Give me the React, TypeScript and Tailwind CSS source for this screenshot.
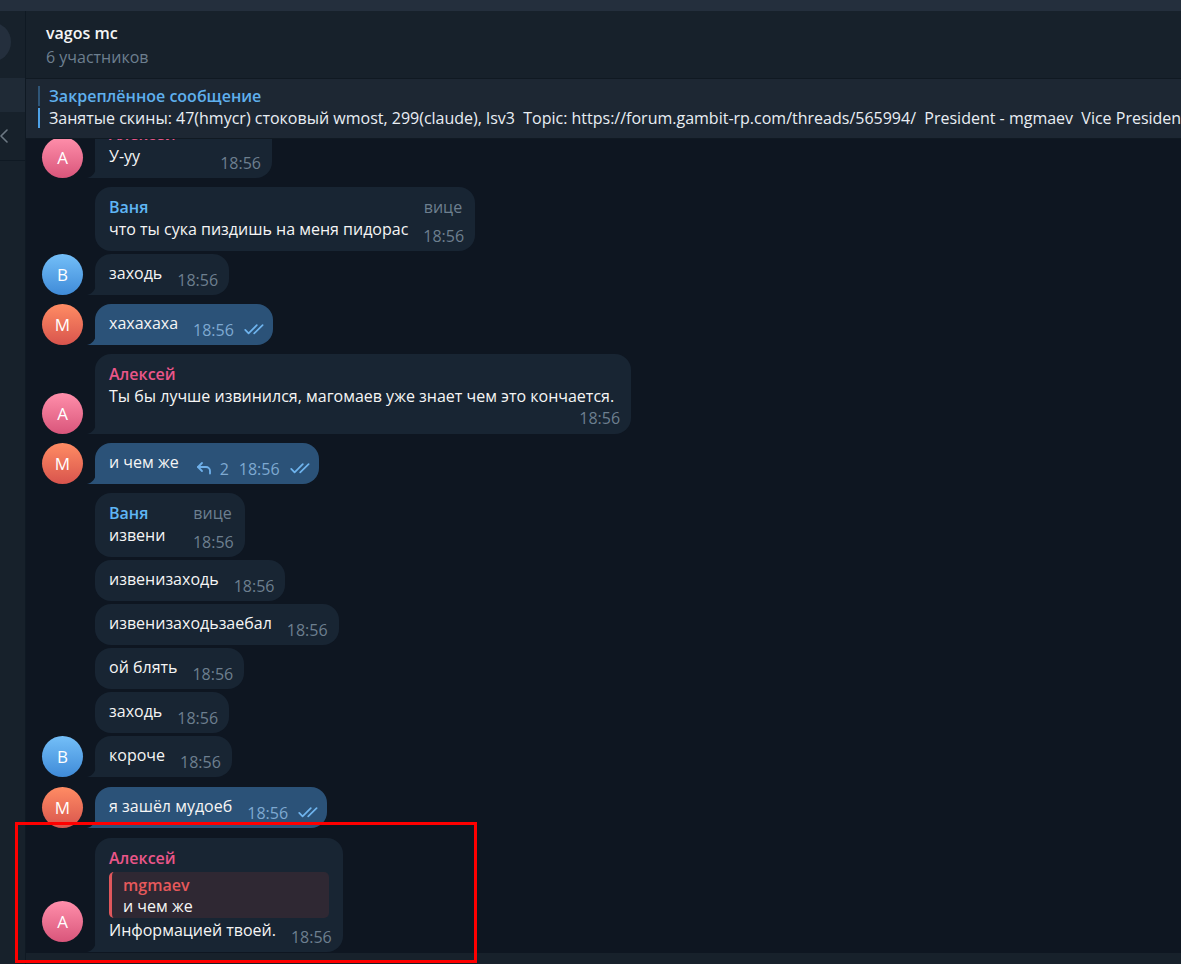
import React from "react";

type AvatarKind = "A" | "B" | "M";

function Avatar({ kind, extra = "" }: { kind: AvatarKind; extra?: string }) {
  const cls =
    kind === "A"
      ? "bg-linear-to-b from-[#ff8fab] to-[#d9557b]"
      : kind === "B"
      ? "bg-linear-to-b from-[#74bff8] to-[#3f8bd8]"
      : "bg-linear-to-b from-[#ff8c64] to-[#d8544d]";
  return (
    <div
      className={`w-[41px] h-[41px] rounded-full flex items-center justify-center text-white text-[17px] leading-none ${cls} ${extra}`}
    >
      {kind === "A" ? "A" : kind === "B" ? "B" : "M"}
    </div>
  );
}

function Tail({ out }: { out?: boolean }) {
  return (
    <svg className="absolute bottom-0 left-[-8px]" width="9" height="12" viewBox="0 0 9 12">
      <path d="M9 0 C9 7 5 11 0 12 L9 12 Z" fill={out ? "#2b5278" : "#182533"} />
    </svg>
  );
}

function Checks() {
  return (
    <svg width="21" height="11" viewBox="0 0 21 11" fill="none" className="mb-[3px]">
      <path d="M1.2 5.8 L4.6 9.4 L12.8 1.2" stroke="#6fb4ee" strokeWidth="1.7" strokeLinecap="round" strokeLinejoin="round" />
      <path d="M10.2 9.4 L18.6 1.2" stroke="#6fb4ee" strokeWidth="1.7" strokeLinecap="round" strokeLinejoin="round" />
    </svg>
  );
}

function ReplyIcon() {
  return (
    <svg width="16" height="14" viewBox="0 0 16 14" fill="none" className="mb-[2px]">
      <path d="M6 2 L2 6 L6 10" stroke="#6fb0ea" strokeWidth="1.8" strokeLinecap="round" strokeLinejoin="round" />
      <path d="M2 6 H10 A4 4 0 0 1 14 10 V12.5" stroke="#6fb0ea" strokeWidth="1.8" strokeLinecap="round" strokeLinejoin="round" />
    </svg>
  );
}

function Time({ out }: { out?: boolean }) {
  return (
    <span className={`text-[16px] leading-[16px] ${out ? "text-[#7ea9d1]" : "text-[#6d7f8f]"}`}>18:56</span>
  );
}

function Row({
  avatar,
  avatarExtra,
  mt,
  children,
}: {
  avatar?: AvatarKind;
  avatarExtra?: string;
  mt: string;
  children: React.ReactNode;
}) {
  return (
    <div className={`flex items-end pl-[16px] shrink-0 ${mt}`}>
      <div className="w-[41px] mr-[12px] shrink-0 flex flex-col justify-end">
        {avatar && <Avatar kind={avatar} extra={avatarExtra} />}
      </div>
      {children}
    </div>
  );
}

function Bubble({
  out,
  tail,
  children,
  extra = "",
}: {
  out?: boolean;
  tail?: boolean;
  children: React.ReactNode;
  extra?: string;
}) {
  return (
    <div
      className={`relative pt-[9px] pb-[8px] pl-[14px] ${
        out ? "bg-[#2b5278] pr-[8px]" : "bg-[#182533] pr-[11px]"
      } ${tail ? "rounded-tl-[16px] rounded-tr-[16px] rounded-br-[16px]" : "rounded-[16px]"} ${extra}`}
    >
      {tail && <Tail out={out} />}
      {children}
    </div>
  );
}

function TextTime({ text, spread }: { text: string; spread?: boolean }) {
  return (
    <div className={`flex items-end ${spread ? "justify-between" : ""}`}>
      <span className="text-[16px] leading-[21px] pb-[3px] text-[#f5f5f5]">{text}</span>
      <span className="ml-[15px] translate-y-[1px] flex">
        <Time />
      </span>
    </div>
  );
}

function Simple({ text, avatar, mt, tail }: { text: string; avatar?: AvatarKind; mt: string; tail?: boolean }) {
  return (
    <Row avatar={avatar} mt={mt}>
      <Bubble tail={tail}>
        <TextTime text={text} />
      </Bubble>
    </Row>
  );
}

function OutSimple({ text, mt, reply }: { text: string; mt: string; reply?: boolean }) {
  return (
    <Row avatar="M" mt={mt}>
      <Bubble out tail>
        <div className="flex items-end">
          <span className="text-[16px] leading-[21px] pb-[3px] text-[#f5f5f5]">{text}</span>
          <span className="flex items-end translate-y-[1px]">
            {reply && (
              <span className="ml-[17px] flex items-end">
                <ReplyIcon />
                <span className="ml-[8px] text-[16px] leading-[16px] text-[#7ea9d1]">2</span>
              </span>
            )}
            <span className={reply ? "ml-[10px] flex" : "ml-[15px] flex"}>
              <Time out />
            </span>
            <span className="ml-[10px] flex items-end">
              <Checks />
            </span>
          </span>
        </div>
      </Bubble>
    </Row>
  );
}

function NameRow({ name, color, badge }: { name: string; color: string; badge?: boolean }) {
  return (
    <div className="flex items-center justify-between h-[23px] leading-[23px]">
      <span className={`text-[16px] font-semibold ${color}`}>{name}</span>
      {badge && <span className="ml-[45px] pr-[2px] text-[16px] text-[#6d7f8f]">вице</span>}
    </div>
  );
}

export default function App() {
  return (
    <div className="w-[1181px] h-[964px] bg-[#0e1621] flex flex-col relative overflow-hidden font-['Open_Sans',sans-serif]">
      {/* top strip */}
      <div className="h-[11px] bg-[#242f3d] shrink-0" />
      <div className="flex flex-1 min-h-0">
        {/* sidebar */}
        <div className="w-[26px] shrink-0 bg-[#17212b] border-r border-[#0f1923] flex flex-col overflow-hidden">
          <div className="h-[67px] pt-[11px]">
            <div className="w-[40px] h-[40px] rounded-full bg-[#242f3d] -ml-[29px]" />
          </div>
          <div className="h-[34px] bg-[#1f2a36]" />
          <div className="h-[48px] flex items-center">
            <svg width="10" height="16" viewBox="0 0 10 16" fill="none">
              <path d="M7 2 L1 8 L7 14" stroke="#6c7883" strokeWidth="1.6" strokeLinecap="round" strokeLinejoin="round" />
            </svg>
          </div>
          <div className="h-[1px] bg-[#0f1923]" />
        </div>

        {/* chat column */}
        <div className="flex-1 flex flex-col min-w-0">
          {/* header */}
          <div className="h-[67px] bg-[#17212b] pl-[20px] pt-[11px] shrink-0">
            <div className="text-[16px] leading-[22px] font-semibold text-[#f5f5f5]">vagos mc</div>
            <div className="mt-[2px] text-[16px] leading-[22px] text-[#6d7f8f]">6 участников</div>
          </div>
          {/* pinned */}
          <div className="h-[61px] bg-[#1d2733] border-t border-b border-[#101922] flex pl-[12px] pt-[6px] shrink-0 overflow-hidden">
            <div className="w-[2px] mr-[9px] mt-[1px] flex flex-col gap-[2px] shrink-0">
              <div className="h-[20px] bg-[#2f5577]" />
              <div className="h-[20px] bg-[#4ea1e6]" />
            </div>
            <div className="min-w-0 flex-1 overflow-hidden">
              <div className="text-[16px] leading-[22px] font-semibold text-[#5fb0ee]">Закреплённое сообщение</div>
              <div className="text-[16px] leading-[22px] text-[#e9eef3] whitespace-pre">
                {"Занятые скины: 47(hmycr) стоковый wmost, 299(claude), lsv3  Topic: https://forum.gambit-rp.com/threads/565994/  President - mgmaev  Vice President - ..."}
              </div>
            </div>
          </div>

          {/* messages */}
          <div className="flex-1 min-h-0 overflow-hidden flex flex-col justify-end pb-[1px]">
            <Row avatar="A" mt="mt-0">
              <Bubble tail extra="w-[177px]">
                <NameRow name="Алексей" color="text-[#ea5689]" />
                <TextTime text="У-уу" spread />
              </Bubble>
            </Row>
            <Row mt="mt-[9px]">
              <Bubble>
                <NameRow name="Ваня" color="text-[#5fb6f5]" badge />
                <TextTime text="что ты сука пиздишь на меня пидорас" spread />
              </Bubble>
            </Row>
            <Simple text="заходь" avatar="B" mt="mt-[3px]" tail />
            <OutSimple text="хахахаха" mt="mt-[9px]" />
            <Row avatar="A" mt="mt-[9px]">
              <Bubble tail>
                <NameRow name="Алексей" color="text-[#ea5689]" />
                <div className="text-[16px] leading-[21px] text-[#f5f5f5] pr-[6px]">
                  Ты бы лучше извинился, магомаев уже знает чем это кончается.
                </div>
                <div className="flex justify-end mt-[3px]">
                  <Time />
                </div>
              </Bubble>
            </Row>
            <OutSimple text="и чем же" mt="mt-[9px]" reply />
            <Row mt="mt-[9px]">
              <Bubble>
                <NameRow name="Ваня" color="text-[#5fb6f5]" badge />
                <TextTime text="извени" spread />
              </Bubble>
            </Row>
            <Simple text="извенизаходь" mt="mt-[3px]" />
            <Simple text="извенизаходьзаебал" mt="mt-[3px]" />
            <Simple text="ой блять" mt="mt-[3px]" />
            <Simple text="заходь" mt="mt-[3px]" />
            <Simple text="короче" avatar="B" mt="mt-[3px]" tail />
            <OutSimple text="я зашёл мудоеб" mt="mt-[10px]" />
            <Row avatar="A" avatarExtra="mb-[10px]" mt="mt-[10px]">
              <Bubble tail>
                <NameRow name="Алексей" color="text-[#ea5689]" />
                <div className="mt-[2px] mr-[3px] bg-[#2f2833] border-l-[3px] border-[#e0575c] rounded-[5px] pl-[11px] pt-[3px] pb-[1px]">
                  <div className="text-[16px] leading-[21px] font-semibold text-[#e6595b]">mgmaev</div>
                  <div className="text-[16px] leading-[21px] text-[#f5f5f5]">и чем же</div>
                </div>
                <div className="mt-[2px]">
                  <TextTime text="Информацией твоей." />
                </div>
              </Bubble>
            </Row>
          </div>
          {/* bottom strip */}
          <div className="h-[11px] bg-[#17212b] shrink-0" />
        </div>
      </div>

      {/* red annotation box */}
      <div className="absolute left-[15px] top-[822px] w-[462px] h-[141px] border-[3px] border-[#ff0000] pointer-events-none" />
    </div>
  );
}
